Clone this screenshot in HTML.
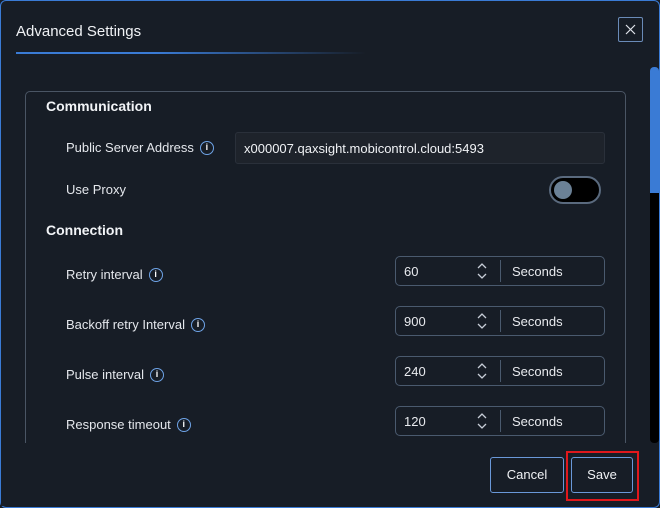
<!DOCTYPE html>
<html><head><style>
*{margin:0;padding:0;box-sizing:border-box}
body{width:660px;height:508px;background:#171d26;font-family:"Liberation Sans",sans-serif;color:#e8eaee;position:relative;overflow:hidden}
.dlg{position:absolute;left:0;top:0;width:660px;height:508px;border:1px solid #3a7bd5;border-radius:6px;background:#171d26}
.abs{position:absolute}
.title{left:16px;top:23px;font-size:15px;color:#f0f2f5}
.uline{left:16px;top:52px;width:350px;height:2px;background:linear-gradient(90deg,#3a7bd5 0%,#3a7bd5 40%,rgba(58,123,213,0) 100%)}
.close{left:618px;top:17px;width:25px;height:25px;border:1px solid #6a8bb8;border-radius:2px}
.card{left:25px;top:91px;width:601px;height:400px;border:1px solid #4a5564;border-radius:5px}
h3{position:absolute;font-size:14px;font-weight:bold;color:#f2f4f7}
.lbl{position:absolute;font-size:13px;color:#e4e7ec;display:flex;align-items:center}
.i{display:inline-block;width:14px;height:14px;border:1.5px solid #6ea3e6;border-radius:50%;margin-left:6px;font-size:9px;font-weight:bold;text-align:center;line-height:11px;color:#fff}
.inp{position:absolute;left:235px;top:132px;width:370px;height:32px;background:#1e232b;border:1px solid #2a303a;border-radius:3px;font-size:13px;padding:8px 8px;color:#f0f2f5}
.tog{position:absolute;left:549px;top:176px;width:52px;height:28px;border:2px solid #5a6a7e;border-radius:14px;background:#000}
.tog:after{content:"";position:absolute;left:3px;top:3px;width:18px;height:18px;border-radius:50%;background:#6b8196}
.num{position:absolute;left:395px;width:210px;height:30px;border:1px solid #4a5a6e;border-radius:5px;font-size:13px}
.num .v{position:absolute;left:8px;top:7px}
.num .sp{position:absolute;left:80px;top:4px;width:12px;height:20px}
.num .d{position:absolute;left:104px;top:3px;width:1px;height:22px;background:#4a5a6e}
.num .s{position:absolute;left:116px;top:7px}
.sb{left:650px;top:67px;width:9px;height:126px;background:#3a7bd5;border-radius:4px 4px 0 0}
.sbt{left:650px;top:193px;width:9px;height:250px;background:#000;border-radius:0 0 4px 4px}
.btn{position:absolute;height:36px;border:1px solid #6a98d8;border-radius:3px;font-size:13px;text-align:center;line-height:34px;color:#f0f2f5;background:#171d26}
</style></head><body>
<div class="dlg"></div>
<div class="abs title">Advanced Settings</div>
<div class="abs uline"></div>
<div class="abs close"><svg width="23" height="23" viewBox="0 0 23 23" style="position:absolute;left:0;top:0"><path d="M7 7l9 9M16 7l-9 9" stroke="#dfe3ea" stroke-width="1.2"/></svg></div>
<div class="abs card"></div>
<div class="abs sb"></div><div class="abs sbt"></div>
<h3 style="left:46px;top:98px">Communication</h3>
<div class="lbl" style="left:66px;top:140px">Public Server Address<span class="i">i</span></div>
<div class="inp">x000007.qaxsight.mobicontrol.cloud:5493</div>
<div class="lbl" style="left:66px;top:182px">Use Proxy</div>
<div class="tog"></div>
<h3 style="left:46px;top:222px">Connection</h3>
<div class="lbl" style="left:66px;top:267px">Retry interval<span class="i">i</span></div>
<div class="lbl" style="left:66px;top:317px">Backoff retry Interval<span class="i">i</span></div>
<div class="lbl" style="left:66px;top:367px">Pulse interval<span class="i">i</span></div>
<div class="lbl" style="left:66px;top:417px">Response timeout<span class="i">i</span></div>
<div class="num" style="top:256px"><span class="v">60</span><svg class="sp" viewBox="0 0 12 20"><path d="M2 7l4-4 4 4M2 13l4 4 4-4" fill="none" stroke="#c8ced8" stroke-width="1.3"/></svg><div class="d"></div><span class="s">Seconds</span></div>
<div class="num" style="top:306px"><span class="v">900</span><svg class="sp" viewBox="0 0 12 20"><path d="M2 7l4-4 4 4M2 13l4 4 4-4" fill="none" stroke="#c8ced8" stroke-width="1.3"/></svg><div class="d"></div><span class="s">Seconds</span></div>
<div class="num" style="top:356px"><span class="v">240</span><svg class="sp" viewBox="0 0 12 20"><path d="M2 7l4-4 4 4M2 13l4 4 4-4" fill="none" stroke="#c8ced8" stroke-width="1.3"/></svg><div class="d"></div><span class="s">Seconds</span></div>
<div class="num" style="top:406px"><span class="v">120</span><svg class="sp" viewBox="0 0 12 20"><path d="M2 7l4-4 4 4M2 13l4 4 4-4" fill="none" stroke="#c8ced8" stroke-width="1.3"/></svg><div class="d"></div><span class="s">Seconds</span></div>
<div class="abs" style="left:1px;top:443px;width:648px;height:63px;background:#171d26"></div>
<div class="btn" style="left:490px;top:457px;width:74px">Cancel</div>
<div class="abs" style="left:566px;top:451px;width:73px;height:50px;border:2px solid #e0181c"></div>
<div class="btn" style="left:571px;top:457px;width:62px">Save</div>
</body></html>
